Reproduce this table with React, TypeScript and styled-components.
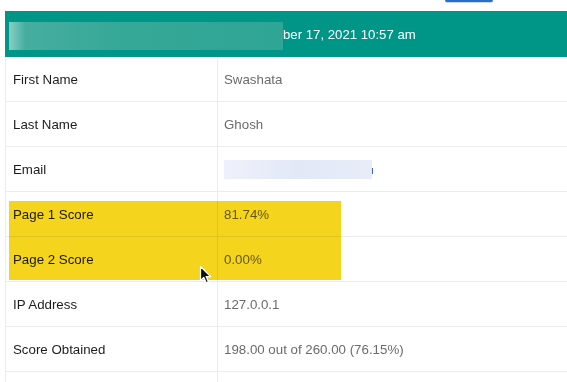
import React from "react";
import styled, { createGlobalStyle } from "styled-components";

const Global = createGlobalStyle`
  html, body { margin: 0; padding: 0; background: #fff; overflow: hidden; }
  body { font-family: "Liberation Sans", Arial, sans-serif; }
`;

const Page = styled.div`
  position: relative;
  width: 567px;
  height: 382px;
  overflow: hidden;
  padding-left: 5px;
  box-sizing: border-box;
`;

const Toolbar = styled.div`
  height: 11px;
  display: flex;
  align-items: flex-start;
  padding-left: 440px;
`;

const ButtonEdge = styled.div`
  width: 48px;
  height: 2px;
  background: #2a6ec4;
  border-radius: 0 0 3px 3px;
  box-shadow: 0 1px 0 #c9d8ee;
`;

const Table = styled.div`
  width: 620px;
  border-left: 1px solid #ececec;
`;

const Header = styled.div`
  height: 46px;
  margin-left: -1px;
  background: #009687;
  display: flex;
  align-items: center;
  padding-left: 4px;
  color: #fff;
  font-size: 13.2px;
`;

const BlurBox = styled.div<{ $w: number; $h: number }>`
  width: ${(p) => p.$w}px;
  height: ${(p) => p.$h}px;
  flex: none;
`;

const HeaderBlur = styled(BlurBox)`
  margin-top: 3px;
  background: linear-gradient(90deg, #86cfc5 0%, #45ae9f 6%, #36a898 40%, #2fa595 100%);
`;

const Row = styled.div`
  display: grid;
  grid-template-columns: 212px 1fr;
  height: 45px;
`;

const Cell = styled.div<{ $value?: boolean }>`
  display: flex;
  align-items: center;
  box-sizing: border-box;
  border-bottom: 1px solid #ececec;
  padding-left: ${(p) => (p.$value ? 6 : 7)}px;
  font-size: 13.3px;
  color: ${(p) => (p.$value ? "#6b6b6b" : "#1d1d1d")};
  ${(p) => (!p.$value ? "border-right: 1px solid #ececec;" : "")}
`;

const EmailBlur = styled(BlurBox)`
  background: linear-gradient(90deg, #eef1fb 0%, #e3e8f7 50%, #e8ecf8 100%);
  filter: blur(0.6px);
`;

const Caret = styled.span`
  display: inline-block;
  width: 1px;
  height: 6px;
  margin-left: 0;
  margin-top: 3px;
  background: #3a62d6;
`;

const Highlight = styled.div`
  position: absolute;
  left: 9px;
  top: 201px;
  width: 332px;
  height: 79px;
  background: #f4d41d;
  mix-blend-mode: multiply;
  pointer-events: none;
`;

const Cursor = styled.svg`
  position: absolute;
  left: 199px;
  top: 265px;
`;

type RowData = { label: string; value: React.ReactNode };

const rows: RowData[] = [
  { label: "First Name", value: "Swashata" },
  { label: "Last Name", value: "Ghosh" },
  {
    label: "Email",
    value: (
      <>
        <EmailBlur $w={148} $h={19} />
        <Caret />
      </>
    ),
  },
  { label: "Page 1 Score", value: "81.74%" },
  { label: "Page 2 Score", value: "0.00%" },
  { label: "IP Address", value: "127.0.0.1" },
  { label: "Score Obtained", value: "198.00 out of 260.00 (76.15%)" },
  { label: "", value: "" },
];

export default function App() {
  return (
    <>
      <Global />
      <Page>
        <Toolbar>
          <ButtonEdge />
        </Toolbar>
        <Table>
          <Header>
            <HeaderBlur $w={274} $h={28} />
            <span>ber 17, 2021 10:57 am</span>
          </Header>
          {rows.map((r, i) => (
            <Row key={i}>
              <Cell>{r.label}</Cell>
              <Cell $value>{r.value}</Cell>
            </Row>
          ))}
        </Table>
        <Highlight />
        <Cursor width="14" height="20" viewBox="0 0 14 20">
          <path
            d="M1.5 1.5 L1.5 15.5 L4.8 12.4 L7.2 17.8 L9.4 16.8 L7.1 11.6 L11.6 11.6 Z"
            fill="#111"
            stroke="#fff"
            strokeWidth="1.2"
            strokeLinejoin="round"
          />
        </Cursor>
      </Page>
    </>
  );
}
